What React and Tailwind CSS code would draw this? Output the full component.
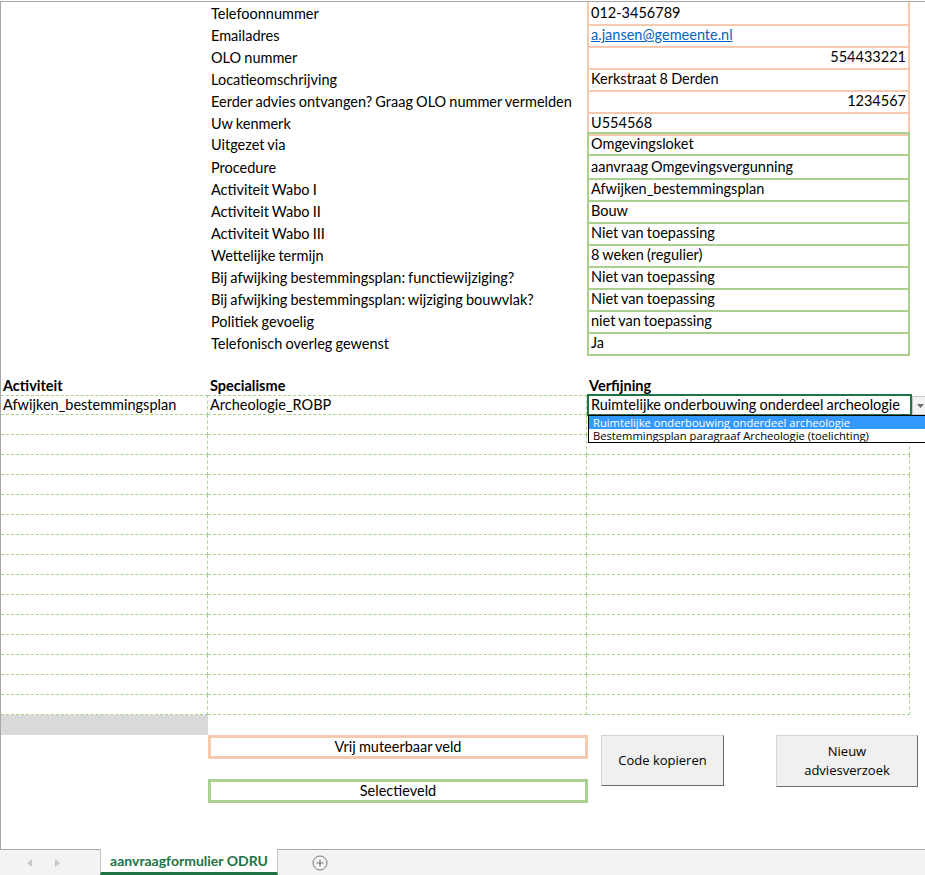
import React from 'react'

const FONT = { fontFamily: 'Lato, "Liberation Sans", sans-serif' }
const UI_FONT = { fontFamily: '"Open Sans", "Liberation Sans", sans-serif' }

const fields = [
  { label: 'Telefoonnummer', value: '012-3456789', kind: 's' },
  { label: 'Emailadres', value: 'a.jansen@gemeente.nl', kind: 's', link: true },
  { label: 'OLO nummer', value: '554433221', kind: 's', right: true },
  { label: 'Locatieomschrijving', value: 'Kerkstraat 8 Derden', kind: 's' },
  { label: 'Eerder advies ontvangen? Graag OLO nummer vermelden', value: '1234567', kind: 's', right: true },
  { label: 'Uw kenmerk', value: 'U554568', kind: 's' },
  { label: 'Uitgezet via', value: 'Omgevingsloket', kind: 'g', first: true },
  { label: 'Procedure', value: 'aanvraag Omgevingsvergunning', kind: 'g' },
  { label: 'Activiteit Wabo I', value: 'Afwijken_bestemmingsplan', kind: 'g' },
  { label: 'Activiteit Wabo II', value: 'Bouw', kind: 'g' },
  { label: 'Activiteit Wabo III', value: 'Niet van toepassing', kind: 'g' },
  { label: 'Wettelijke termijn', value: '8 weken (regulier)', kind: 'g' },
  { label: 'Bij afwijking bestemmingsplan: functiewijziging?', value: 'Niet van toepassing', kind: 'g' },
  { label: 'Bij afwijking bestemmingsplan: wijziging bouwvlak?', value: 'Niet van toepassing', kind: 'g' },
  { label: 'Politiek gevoelig', value: 'niet van toepassing', kind: 'g' },
  { label: 'Telefonisch overleg gewenst', value: 'Ja', kind: 'g' },
]

function FieldRow({ f }) {
  const color = f.kind === 's' ? 'border-[#f5c9ad]' : 'border-[#a9d08e]'
  return (
    <div className="grid grid-cols-[207px_379px_323px] h-[22px]">
      <div />
      <div className="pl-[3px] flex items-center whitespace-nowrap">{f.label}</div>
      <div
        className={
          'border-x-2 border-b-2 flex items-center px-[2px] ' +
          color +
          (f.first ? ' border-t-2 -mt-[2px] h-[24px]' : '') +
          (f.right ? ' justify-end' : '')
        }
      >
        {f.link ? <span className="text-[#0563c1] underline">{f.value}</span> : f.value}
      </div>
    </div>
  )
}

function DataRow({ first, a, b, c }) {
  const cell = 'border-r border-b border-dashed border-[#a9d08e] h-[20px] flex items-center pl-[2px] whitespace-nowrap' + (first ? ' border-t' : '')
  return (
    <div className="grid grid-cols-[207px_379px_323px]">
      <div className={cell}>{a}</div>
      <div className={cell}>{b}</div>
      <div className={cell}>{c}</div>
    </div>
  )
}

export default function App() {
  const empties = Array.from({ length: 15 })
  return (
    <div className="w-[925px] h-[875px] overflow-hidden bg-white text-black text-[14.5px] [word-spacing:-0.6px] flex flex-col" style={FONT}>
      <div className="relative h-[849px] border-l border-t border-[#a6a6a6] mt-px">
        {fields.map((f, i) => (
          <FieldRow key={i} f={f} />
        ))}

        <div className="h-[21px]" />
        <div className="grid grid-cols-[207px_379px_323px] h-[20px] font-bold">
          <div className="pl-[2px] flex items-end">Activiteit</div>
          <div className="pl-[2px] flex items-end">Specialisme</div>
          <div className="pl-[2px] flex items-end">Verfijning</div>
        </div>

        <div className="relative">
          <DataRow first a="Afwijken_bestemmingsplan" b="Archeologie_ROBP" c="" />
          {empties.map((_, i) => (
            <DataRow key={i} />
          ))}

          {/* active cell with validation dropdown */}
          <div className="absolute left-[586px] top-[-1px] w-[325px] h-[22px] border-2 border-[#217346] bg-white flex items-center pl-[2px] whitespace-nowrap">
            Ruimtelijke onderbouwing onderdeel archeologie
          </div>
          <div className="absolute left-[911px] top-[1px] w-[16px] h-[19px] bg-[#f2f2f2] border border-[#c8c8c8] flex items-center justify-center">
            <svg width="7" height="4" viewBox="0 0 7 4"><polygon points="0,0 7,0 3.5,4" fill="#6d6d6d" /></svg>
          </div>
          <div className="absolute left-[587px] top-[20px] w-[345px] border border-black bg-white text-[11.2px] leading-[13px] [word-spacing:0px] whitespace-nowrap" style={UI_FONT}>
            <div className="bg-[#3399ff] text-white pl-[4px]">Ruimtelijke onderbouwing onderdeel archeologie</div>
            <div className="pl-[4px]">Bestemmingsplan paragraaf Archeologie (toelichting)</div>
          </div>
        </div>

        <div className="w-[207px] h-[20px] bg-[#d9d9d9]" />

        <div className="flex">
          <div className="w-[207px]" />
          <div className="w-[380px] flex flex-col gap-[20px]">
            <div className="h-[24px] border-[3px] border-[#f5c9ad] flex items-center justify-center">Vrij muteerbaar veld</div>
            <div className="h-[24px] border-[3px] border-[#a9d08e] flex items-center justify-center">Selectieveld</div>
          </div>
          <button className="ml-[13px] w-[123px] h-[51px] bg-[#f0f0f0] border border-[#d4d4d4] border-r-[#6a6a6a] border-b-[#6a6a6a] text-[13px] [word-spacing:0px]" style={UI_FONT}>
            Code kopieren
          </button>
          <button className="ml-[52px] w-[142px] h-[52px] bg-[#f0f0f0] border border-[#d4d4d4] border-r-[#6a6a6a] border-b-[#6a6a6a] text-[13px] leading-[19px] [word-spacing:0px]" style={UI_FONT}>
            Nieuw<br />adviesverzoek
          </button>
        </div>
      </div>

      <div className="h-[26px] border-t border-[#a6a6a6] bg-[#f3f3f3] flex items-stretch [word-spacing:0px]">
        <div className="w-[100px] flex items-center">
          <svg className="ml-[27px]" width="5" height="8" viewBox="0 0 5 8"><polygon points="5,0 5,8 0,4" fill="#c8c8c8" /></svg>
          <svg className="ml-[23px]" width="5" height="8" viewBox="0 0 5 8"><polygon points="0,0 0,8 5,4" fill="#c8c8c8" /></svg>
        </div>
        <div className="w-[178px] -mt-px bg-white border-x border-[#c6c6c6] border-b-[3px] border-b-[#217346] flex items-center justify-center font-bold text-[14px] text-[#217346]">
          aanvraagformulier ODRU
        </div>
        <div className="ml-[34px] flex items-center">
          <svg width="16" height="16" viewBox="0 0 16 16">
            <circle cx="8" cy="8" r="7" fill="none" stroke="#777" strokeWidth="1" />
            <path d="M8 4.5v7M4.5 8h7" stroke="#777" strokeWidth="1.2" />
          </svg>
        </div>
      </div>
    </div>
  )
}
